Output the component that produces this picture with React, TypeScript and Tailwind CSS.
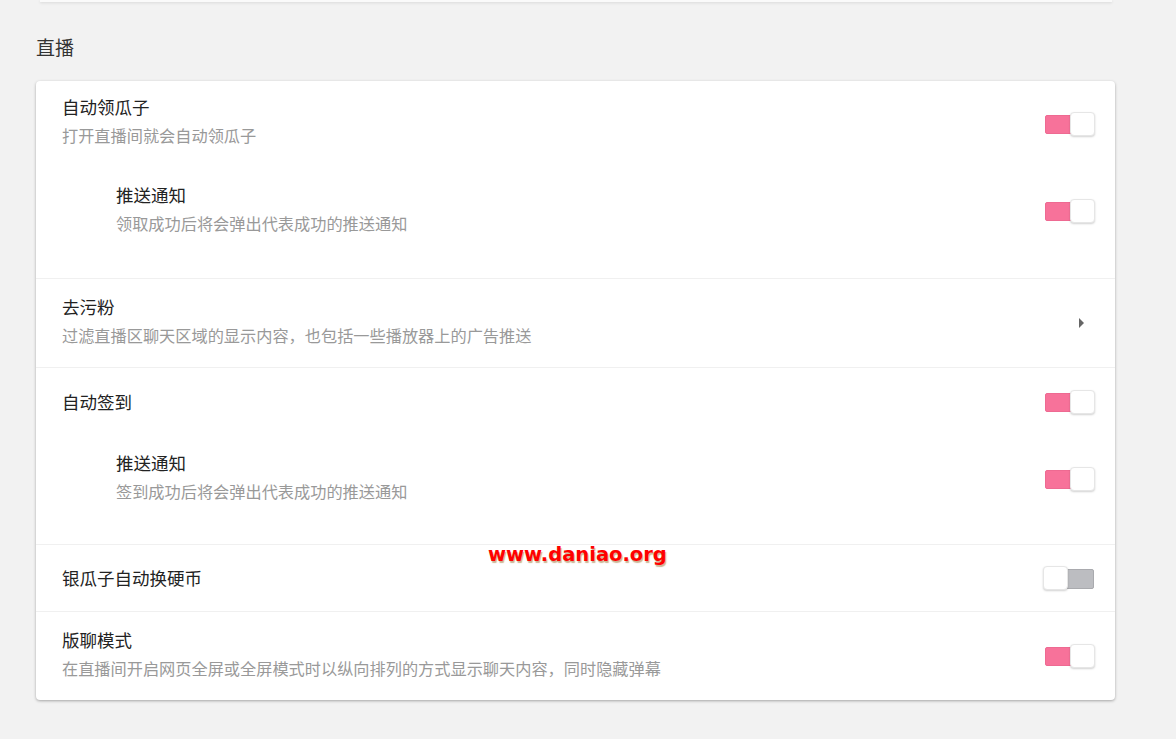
import React from "react";

const font = { fontFamily: '"Noto Sans CJK SC", "Noto Sans", sans-serif' };

function Toggle({ on = true }: { on?: boolean }) {
  if (on) {
    return (
      <div className="relative w-[50px] h-[24px] shrink-0">
        <div className="absolute left-0 top-[3px] w-[30px] h-[19px] rounded-[2px] bg-[#f7729a] border border-[#ee6a92]" />
        <div className="absolute right-0 top-0 w-[25px] h-[24px] rounded-[4px] bg-white border border-[#e6e6e6] shadow-[0_1px_2px_rgba(0,0,0,0.18)]" />
      </div>
    );
  }
  return (
    <div className="relative w-[50px] h-[24px] shrink-0">
      <div className="absolute left-[21px] top-[3px] w-[28px] h-[20px] rounded-[2px] bg-[#bcbdc1] border border-[#a9aaae]" />
      <div className="absolute left-[-2px] top-0 w-[25px] h-[24px] rounded-[4px] bg-white border border-[#e6e6e6] shadow-[0_1px_2px_rgba(0,0,0,0.18)]" />
    </div>
  );
}

function Text({ title, desc }: { title: string; desc?: string }) {
  return (
    <div>
      <div className="text-[17.5px] leading-[22px] text-[#222]">{title}</div>
      {desc && <div className="mt-[7px] text-[16.2px] leading-[20px] text-[#999]">{desc}</div>}
    </div>
  );
}

export default function App() {
  return (
    <div className="relative min-h-[739px] w-[1176px] bg-[#f2f2f2] overflow-hidden" style={font}>
      <div className="ml-[40px] w-[1072px] h-[2px] bg-[#fafafa] shadow-[0_1px_3px_rgba(0,0,0,0.12)]" />
      <div className="ml-[36px] w-[1079px]">
        <div className="mt-[33px] h-[24px] text-[19px] leading-[24px] text-[#333]">直播</div>
        <div className="mt-[22px] bg-white rounded-[4px] shadow-[0_1px_3px_rgba(0,0,0,0.32)]">
          {/* Block 1 */}
          <div className="pt-[15px] pb-[45px] pl-[26px] pr-[20px]">
            <div className="flex items-start justify-between">
              <Text title="自动领瓜子" desc="打开直播间就会自动领瓜子" />
              <div className="mt-[16px]"><Toggle /></div>
            </div>
            <div className="mt-[39px] pl-[54px] flex items-start justify-between">
              <Text title="推送通知" desc="领取成功后将会弹出代表成功的推送通知" />
              <div className="mt-[15px]"><Toggle /></div>
            </div>
          </div>
          {/* Block 2 */}
          <div className="border-t border-[#f0f0f0] pt-[17px] pb-[22px] pl-[26px] pr-[20px] flex items-start justify-between">
            <Text title="去污粉" desc="过滤直播区聊天区域的显示内容，也包括一些播放器上的广告推送" />
            <svg className="mt-[21px] mr-[10px]" width="7" height="12" viewBox="0 0 7 12">
              <path d="M1 1 L6 6 L1 11 Z" fill="#666" />
            </svg>
          </div>
          {/* Block 3 */}
          <div className="border-t border-[#f0f0f0] pt-[23px] pb-[43px] pl-[26px] pr-[20px]">
            <div className="flex items-center justify-between h-[22px]">
              <Text title="自动签到" />
              <Toggle />
            </div>
            <div className="mt-[39px] pl-[54px] flex items-start justify-between">
              <Text title="推送通知" desc="签到成功后将会弹出代表成功的推送通知" />
              <div className="mt-[15px]"><Toggle /></div>
            </div>
          </div>
          {/* Block 4 */}
          <div className="border-t border-[#f0f0f0] pt-[22px] pb-[22px] pl-[26px] pr-[20px]">
            <div className="flex items-center justify-between h-[22px]">
              <Text title="银瓜子自动换硬币" />
              <Toggle on={false} />
            </div>
          </div>
          {/* Block 5 */}
          <div className="border-t border-[#f0f0f0] pt-[17px] pb-[22px] pl-[26px] pr-[20px] flex items-start justify-between">
            <Text title="版聊模式" desc="在直播间开启网页全屏或全屏模式时以纵向排列的方式显示聊天内容，同时隐藏弹幕" />
            <div className="mt-[15px]"><Toggle /></div>
          </div>
        </div>
      </div>
      <div
        className="absolute left-[488px] top-[542px] text-[19.5px] leading-[26px] font-bold text-[#ff0000] [text-shadow:1px_2px_1px_rgba(160,120,60,0.55)]"
        style={{ fontFamily: '"DejaVu Sans", Verdana, sans-serif' }}
      >
        www.daniao.org
      </div>
    </div>
  );
}
